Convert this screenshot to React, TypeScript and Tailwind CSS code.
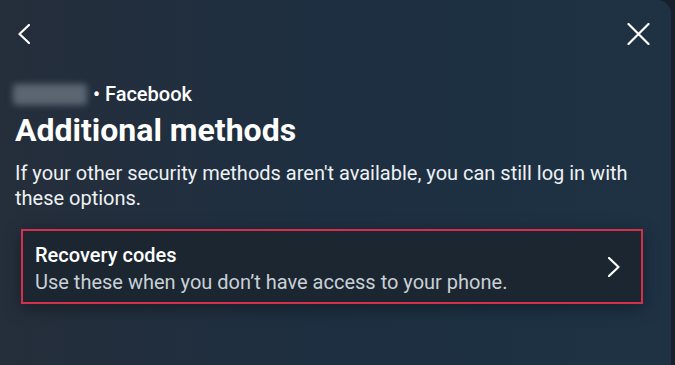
function Chevron({ dir }: { dir: "left" | "right" }) {
  const d = dir === "left" ? "M11 1 L1.5 10 L11 19" : "M1 1 L10.5 10 L1 19";
  return (
    <svg width="12" height="20" viewBox="0 0 12 20" fill="none">
      <path d={d} stroke="white" strokeWidth="2.2" strokeLinecap="round" strokeLinejoin="round" />
    </svg>
  );
}

function CloseIcon() {
  return (
    <svg width="23" height="22" viewBox="0 0 23 22" fill="none">
      <path d="M1.5 1 L21.5 21 M21.5 1 L1.5 21" stroke="white" strokeWidth="2.2" strokeLinecap="round" />
    </svg>
  );
}

export default function App() {
  return (
    <div className="w-[675px] h-[365px] bg-[#18212b] flex overflow-hidden" style={{ fontFamily: "Roboto, 'Liberation Sans', sans-serif" }}>
      <div className="flex-1 mr-[4px] rounded-tr-[14px] bg-gradient-to-r from-[#252e3b] via-[#1d2f41] to-[#1e3244] text-white flex flex-col">
        <div className="flex items-center justify-between pl-[18px] pr-[21px] pt-[23px] h-[45px]">
          <Chevron dir="left" />
          <CloseIcon />
        </div>
        <div className="flex items-center mt-[37px] pl-[13px] h-[24px]">
          <div className="w-[74px] h-[21px] bg-[#5c6572] rounded-[4px] blur-[3px]" />
          <span className="ml-[6px] text-[20px] font-medium leading-none">• Facebook</span>
        </div>
        <h1 className="mt-[5px] px-[15px] text-[32px] font-bold leading-[38px]">Additional methods</h1>
        <p className="mt-[12px] px-[15px] text-[20px] leading-[25px] text-[#eef1f4]">
          If your other security methods aren't available, you can still log in with these options.
        </p>
        <div className="mt-[18px] ml-[21px] mr-[28px] border-2 border-[#d5304b] bg-[#1b2630] shadow-[0_4px_16px_rgba(0,0,0,0.35)] flex items-start pl-[12px] pr-[21px] h-[75px]">
          <div className="flex-1 flex flex-col pt-[11px]">
            <span className="text-[20px] font-medium leading-[26px]">Recovery codes</span>
            <span className="text-[20px] leading-[28px] text-[#c9d0d7]">Use these when you don’t have access to your phone.</span>
          </div>
          <div className="self-center">
            <Chevron dir="right" />
          </div>
        </div>
      </div>
    </div>
  );
}
